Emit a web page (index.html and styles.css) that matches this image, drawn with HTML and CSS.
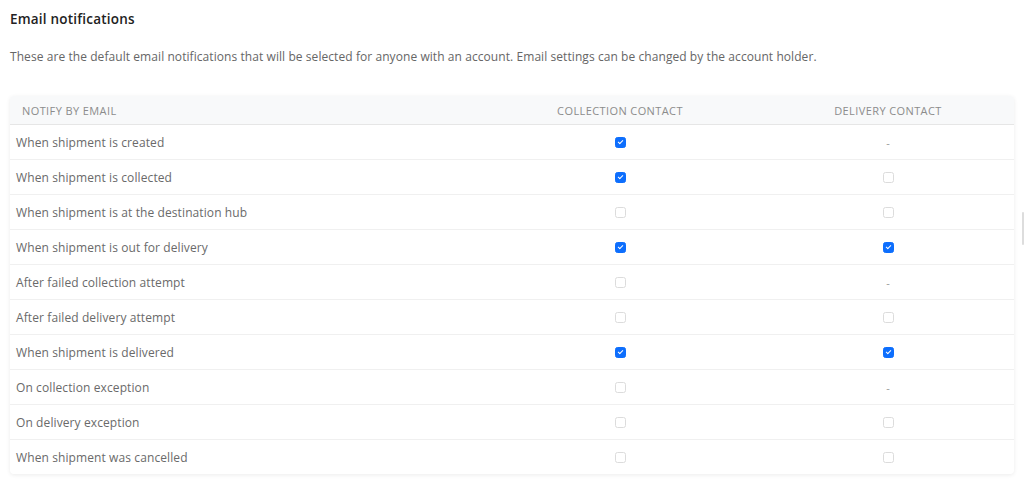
FILE: index.html
```html
<!DOCTYPE html>
<html>
<head>
<meta charset="utf-8">
<link rel="stylesheet" href="styles.css">
</head>
<body>
<div class="page">
  <h2 class="title">Email notifications</h2>
  <p class="desc">These are the default email notifications that will be selected for anyone with an account. Email settings can be changed by the account holder.</p>
  <div class="card">
    <div class="row head">
      <div class="c1">NOTIFY BY EMAIL</div>
      <div class="c2">COLLECTION CONTACT</div>
      <div class="c3">DELIVERY CONTACT</div>
    </div>
    <div class="row"><div class="c1">When shipment is created</div><div class="c2"><span class="cb on"></span></div><div class="c3"><span class="dash">-</span></div></div>
    <div class="row"><div class="c1">When shipment is collected</div><div class="c2"><span class="cb on"></span></div><div class="c3"><span class="cb"></span></div></div>
    <div class="row"><div class="c1">When shipment is at the destination hub</div><div class="c2"><span class="cb"></span></div><div class="c3"><span class="cb"></span></div></div>
    <div class="row"><div class="c1">When shipment is out for delivery</div><div class="c2"><span class="cb on"></span></div><div class="c3"><span class="cb on"></span></div></div>
    <div class="row"><div class="c1">After failed collection attempt</div><div class="c2"><span class="cb"></span></div><div class="c3"><span class="dash">-</span></div></div>
    <div class="row"><div class="c1">After failed delivery attempt</div><div class="c2"><span class="cb"></span></div><div class="c3"><span class="cb"></span></div></div>
    <div class="row"><div class="c1">When shipment is delivered</div><div class="c2"><span class="cb on"></span></div><div class="c3"><span class="cb on"></span></div></div>
    <div class="row"><div class="c1">On collection exception</div><div class="c2"><span class="cb"></span></div><div class="c3"><span class="dash">-</span></div></div>
    <div class="row"><div class="c1">On delivery exception</div><div class="c2"><span class="cb"></span></div><div class="c3"><span class="cb"></span></div></div>
    <div class="row"><div class="c1">When shipment was cancelled</div><div class="c2"><span class="cb"></span></div><div class="c3"><span class="cb"></span></div></div>
  </div>
</div>
<div class="edge"></div>
</body>
</html>
```
FILE: styles.css
```css
html, body { margin: 0; padding: 0; background: #fff; }
body { font-family: "Open Sans", "Noto Sans", sans-serif; color: #555; position: relative; height: 484px; overflow: hidden; }
.page { padding: 10px 10px 0 10px; }
.title { margin: 0; font-size: 13.5px; font-weight: 600; color: #222; line-height: 18px; letter-spacing: 0.2px; }
.desc { margin: 21px 0 0 0; font-size: 12px; line-height: 16px; color: #666; letter-spacing: 0.07px; }
.card { margin-top: 31px; border-radius: 4px; box-shadow: 0 1px 4px rgba(0,0,0,0.08); background: #fff; overflow: hidden; }
.row { display: grid; grid-template-columns: 468px 284px 252px; height: 34px; align-items: center; border-top: 1px solid #f0f0f0; font-size: 12px; letter-spacing: 0.1px; color: #6a6a6a; }
.row.head { height: 28px; border-top: none; border-bottom: 1px solid #e6e6e6; background: #f8f9fa; font-size: 11px; color: #8c8c8c; letter-spacing: 0.4px; }
.row.head + .row { border-top: none; }
.c1 { padding-left: 6px; }
.head .c1 { padding-left: 12px; }
.c2, .c3 { display: flex; justify-content: center; }
.cb { width: 9px; height: 9px; border: 1px solid #dcdcdc; border-radius: 2.5px; background: #fff; position: relative; }
.cb.on { background: #0d6efd; border-color: #0d6efd; }
.cb.on::after { content: ""; position: absolute; left: 3px; top: 1px; width: 2px; height: 4px; border: solid #fff; border-width: 0 1.5px 1.5px 0; transform: rotate(45deg); }
.dash { color: #999; font-size: 11px; }
.edge { position: absolute; right: 0; top: 212px; width: 2px; height: 33px; background: #ddd; border-radius: 1px; }
```
